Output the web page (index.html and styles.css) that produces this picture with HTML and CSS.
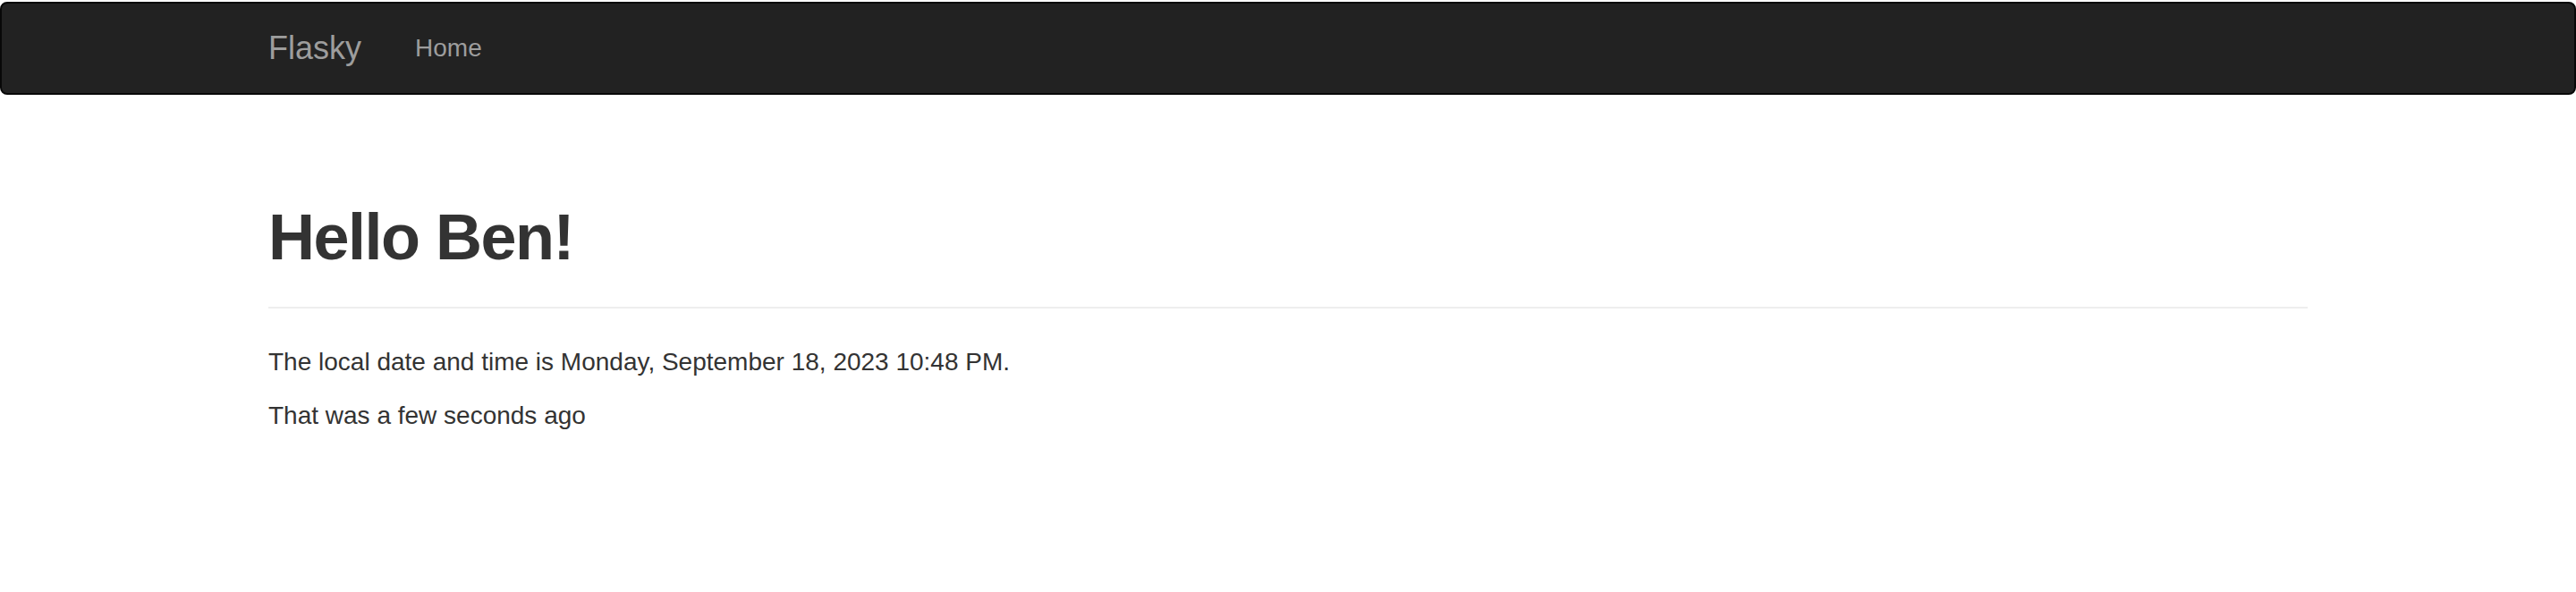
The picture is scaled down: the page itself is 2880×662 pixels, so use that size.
FILE: index.html
```html
<!DOCTYPE html>
<html>
<head>
<meta charset="utf-8">
<title>Flasky</title>
<link rel="stylesheet" href="styles.css">
</head>
<body>
<nav class="navbar">
  <div class="container nav-inner">
    <a class="brand" href="#">Flasky</a>
    <ul class="nav">
      <li><a href="#">Home</a></li>
    </ul>
  </div>
</nav>
<main class="container content">
  <div class="page-header">
    <h1>Hello Ben!</h1>
  </div>
  <p>The local date and time is Monday, September 18, 2023 10:48 PM.</p>
  <p>That was a few seconds ago</p>
</main>
</body>
</html>
```

FILE: styles.css
```css
* { box-sizing: border-box; }
html, body { margin: 0; }
body {
  padding-top: 2px;
  background: #fff;
  color: #333;
  font-family: "Liberation Sans", Arial, Helvetica, sans-serif;
  font-size: 28px;
  line-height: 40px;
}
.container {
  width: 2340px;
  margin: 0 auto;
  padding: 0 30px;
}
.content {
  display: flow-root;
}
.navbar {
  background: #222;
  border: 2px solid #080808;
  border-radius: 8px;
  min-height: 100px;
  margin-bottom: 40px;
}
.nav-inner {
  display: flex;
  align-items: center;
}
.brand {
  display: block;
  color: #9d9d9d;
  text-decoration: none;
  font-size: 36px;
  line-height: 40px;
  padding: 30px 30px 30px 0;
  height: 100px;
}
.nav {
  display: flex;
  list-style: none;
  margin: 0;
  padding: 0;
}
.nav a {
  display: block;
  color: #9d9d9d;
  text-decoration: none;
  padding: 30px;
  line-height: 40px;
}
.page-header {
  margin: 80px 0 40px;
  padding-bottom: 18px;
  border-bottom: 2px solid #eee;
}
h1 {
  margin: 40px 0 20px;
  font-size: 72px;
  font-weight: 700;
  line-height: 1.1;
  letter-spacing: -1.5px;
  color: #333;
}
p {
  margin: 0 0 20px;
}
```
